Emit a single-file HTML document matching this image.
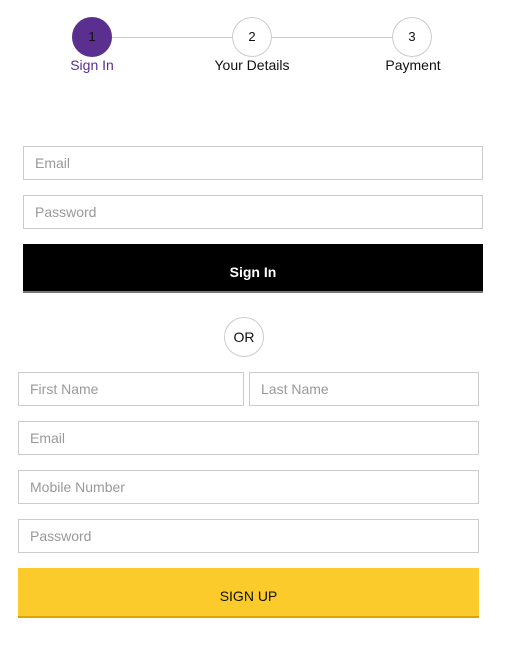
<!DOCTYPE html>
<html><head><style>
*{box-sizing:border-box;margin:0;padding:0}
body{width:515px;height:670px;background:#fff;font-family:"Liberation Sans",sans-serif;position:relative;overflow:hidden}
.a{position:absolute}
.c{width:40px;height:40px;border-radius:50%;border:1px solid #ccc;background:#fff;font-size:13px;text-align:center;line-height:38px;color:#111}
.l{font-size:14px;color:#111;width:120px;text-align:center;top:57px}
.in{border:1px solid #ccc;height:34px;font-size:14px;color:#999;padding-left:11px;line-height:32px}
</style></head><body>
<div class="a" style="left:112px;top:37px;width:280px;height:1px;background:#ccc"></div>
<div class="a c" style="left:72px;top:17px;background:#5b2f8f;border-color:#5b2f8f">1</div>
<div class="a c" style="left:232px;top:17px">2</div>
<div class="a c" style="left:392px;top:17px">3</div>
<div class="a l" style="left:32px;color:#5b2f8f">Sign In</div>
<div class="a l" style="left:192px">Your Details</div>
<div class="a l" style="left:353px">Payment</div>

<div class="a in" style="left:23px;top:146px;width:460px">Email</div>
<div class="a in" style="left:23px;top:195px;width:460px">Password</div>
<div class="a" style="left:23px;top:244px;width:460px;height:49px;background:#000;border-bottom:2px solid #777;color:#fff;font-size:14px;font-weight:bold;text-align:center;line-height:56px">Sign In</div>

<div class="a c" style="left:224px;top:317px;font-size:14px">OR</div>

<div class="a in" style="left:18px;top:372px;width:226px">First Name</div>
<div class="a in" style="left:249px;top:372px;width:230px">Last Name</div>
<div class="a in" style="left:18px;top:421px;width:461px">Email</div>
<div class="a in" style="left:18px;top:470px;width:461px">Mobile Number</div>
<div class="a in" style="left:18px;top:519px;width:461px">Password</div>
<div class="a" style="left:18px;top:568px;width:461px;height:50px;background:#fbca2b;border-bottom:2px solid #e0a400;color:#111;font-size:14px;text-align:center;line-height:56px">SIGN UP</div>
</body></html>
